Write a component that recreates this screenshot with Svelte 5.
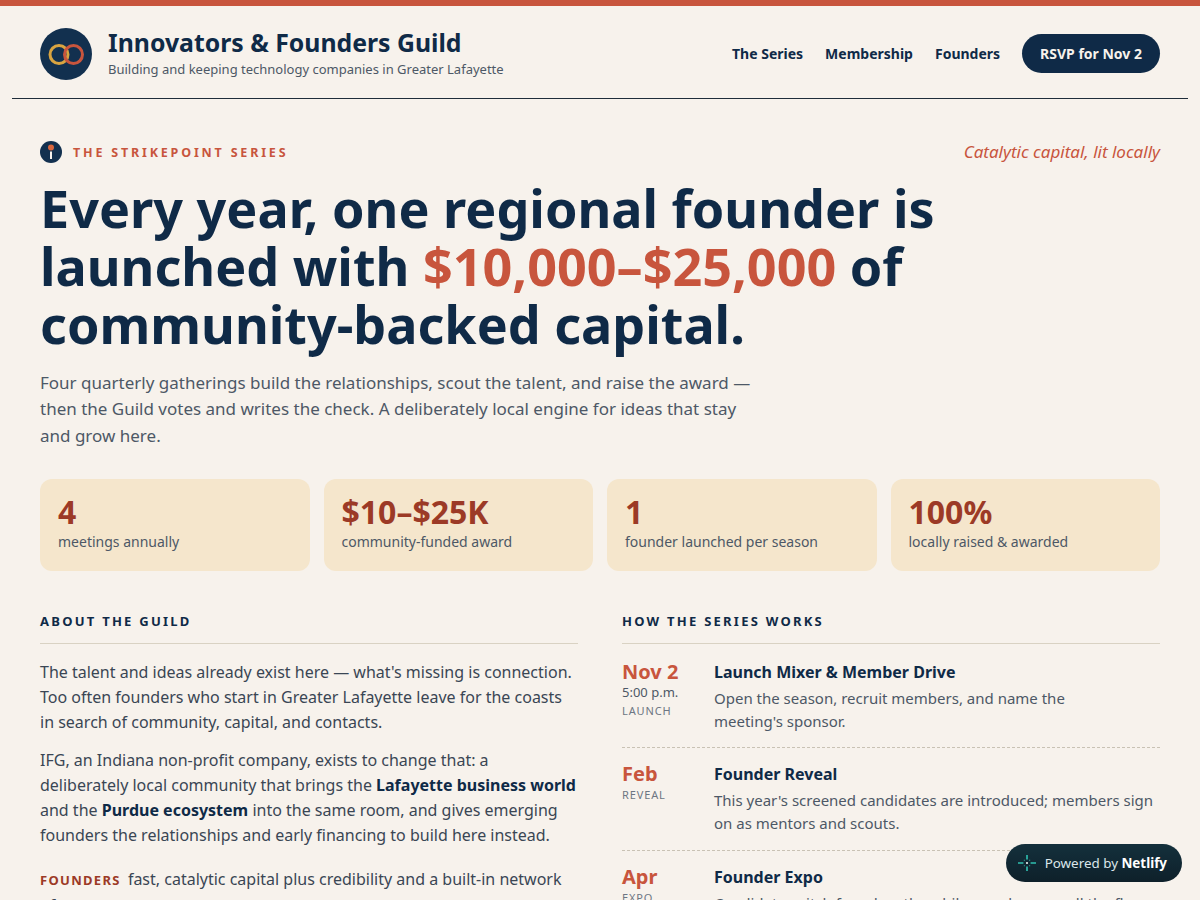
<script lang="ts">
  const stats = [
    { value: "4", label: "meetings annually" },
    { value: "$10–$25K", label: "community-funded award" },
    { value: "1", label: "founder launched per season" },
    { value: "100%", label: "locally raised & awarded" },
  ];

  const steps = [
    {
      date: "Nov 2",
      time: "5:00 p.m.",
      tag: "Launch",
      title: "Launch Mixer & Member Drive",
      text: "Open the season, recruit members, and name the meeting's\u00a0sponsor.",
    },
    {
      date: "Feb",
      tag: "Reveal",
      title: "Founder Reveal",
      text: "This year's screened candidates are introduced; members sign on as mentors and scouts.",
    },
    {
      date: "Apr",
      tag: "Expo",
      title: "Founder Expo",
      text: "Candidates pitch founders the while members enroll the floor and refine their choice.",
    },
  ];
</script>

<div class="topbar"></div>
<div class="shell">
  <header class="site-head">
    <div class="brand">
      <svg class="logo" viewBox="0 0 52 52" aria-hidden="true">
        <circle cx="26" cy="26" r="26" fill="#12304f" />
        <circle cx="19" cy="26.5" r="9" fill="none" stroke="#d9a441" stroke-width="3" />
        <circle cx="33.500" cy="26.5" r="9" fill="none" stroke="#c8553d" stroke-width="3" />
      </svg>
      <div class="brand-text">
        <div class="brand-name">Innovators &amp; Founders Guild</div>
        <div class="brand-sub">Building and keeping technology companies in Greater Lafayette</div>
      </div>
    </div>
    <nav>
      <a href="#series">The Series</a>
      <a href="#membership">Membership</a>
      <a href="#founders">Founders</a>
      <a class="cta" href="#rsvp">RSVP for Nov 2</a>
    </nav>
  </header>

  <main>
    <section class="hero">
      <div class="kicker-row">
        <div class="kicker">
          <svg viewBox="0 0 22 22" aria-hidden="true">
            <circle cx="11" cy="11" r="11" fill="#12304f" />
            <rect x="10" y="10.500" width="2" height="7.500" fill="#f7f2ec" />
            <circle cx="11" cy="6.500" r="3" fill="#d9673f" />
          </svg>
          <span>The Strikepoint Series</span>
        </div>
        <em>Catalytic capital, lit locally</em>
      </div>
      <h1>Every year, one regional founder is launched with <span>$10,000–$25,000</span> of community-backed capital.</h1>
      <p class="lede">Four quarterly gatherings build the relationships, scout the talent, and raise the award — then the Guild votes and writes the check. A deliberately local engine for ideas that stay and grow here.</p>
    </section>

    <section class="stats">
      {#each stats as s}
        <div class="stat">
          <div class="stat-value">{s.value}</div>
          <div class="stat-label">{s.label}</div>
        </div>
      {/each}
    </section>

    <section class="cols">
      <div>
        <h2>About the Guild</h2>
        <p>The talent and ideas already exist here — what's missing is connection. Too often founders who start in Greater Lafayette leave for the coasts in search of community, capital, and contacts.</p>
        <p>IFG, an Indiana non-profit company, exists to change that: a deliberately local community that brings the <strong>Lafayette business world</strong> and the <strong>Purdue ecosystem</strong> into the same room, and gives emerging founders the relationships and early financing to build here instead.</p>
        <p class="audience"><span class="tag">Founders</span> fast, catalytic capital plus credibility and a built-in network of supporters.</p>
      </div>
      <div>
        <h2>How the Series Works</h2>
        <ol>
          {#each steps as step}
            <li>
              <div class="when">
                <div class="date">{step.date}</div>
                {#if step.time}<div class="time">{step.time}</div>{/if}
                <div class="step-tag">{step.tag}</div>
              </div>
              <div>
                <h3>{step.title}</h3>
                <p>{step.text}</p>
              </div>
            </li>
          {/each}
        </ol>
      </div>
    </section>
  </main>
</div>

<a class="netlify" href="#netlify">
  <svg viewBox="0 0 20 20" aria-hidden="true">
    <path d="M0 10h6M14 10h6M10 1v5M10 14v5" stroke="#2fbfb0" stroke-width="1.800" />
    <path d="M6.500 6.500h1v1h-1zM12.500 6.500h1v1h-1zM6.500 12.500h1v1h-1zM12.500 12.500h1v1h-1z" fill="#2fbfb0" />
    <rect x="9" y="9" width="2" height="2" fill="#e8f4f3" />
  </svg>
  <span>Powered by <strong>Netlify</strong></span>
</a>

<style>
  :global(body) {
    background: #f7f2ec;
    color: #0f2a47;
    font-family: "Noto Sans", sans-serif;
  }
  .topbar {
    height: 6px;
    background: #c8553d;
  }
  .shell {
    padding: 0 12px;
  }
  .site-head {
    display: flex;
    align-items: center;
    justify-content: space-between;
    padding: 22px 28px 18px;
    border-bottom: 1px solid #1f2d3a;
  }
  .brand {
    display: flex;
    align-items: center;
    gap: 16px;
  }
  .brand-text {
    margin-top: -2px;
  }
  .logo {
    width: 52px;
    height: 52px;
    display: block;
  }
  .brand-name {
    font-size: 24.800px;
    font-weight: 700;
    line-height: 29px;
  }
  .brand-sub {
    font-size: 13px;
    line-height: 18px;
    margin-top: 3px;
    color: #4d5866;
  }
  nav {
    display: flex;
    align-items: center;
    gap: 22px;
    margin-top: -1px;
  }
  nav a {
    font-size: 14px;
    font-weight: 700;
    color: #0f2a47;
    text-decoration: none;
  }
  nav a.cta {
    background: #0f2a47;
    color: #f7f2ec;
    padding: 10px 18px;
    border-radius: 999px;
  }
  main {
    padding: 0 28px;
  }
  .hero {
    padding-top: 42px;
  }
  .kicker-row {
    display: flex;
    align-items: center;
    justify-content: space-between;
  }
  .kicker {
    display: flex;
    align-items: center;
    gap: 11px;
  }
  .kicker svg {
    width: 22px;
    height: 22px;
  }
  .kicker span {
    font-size: 12.500px;
    font-weight: 700;
    letter-spacing: 0.225em;
    text-transform: uppercase;
    color: #c8553d;
  }
  .kicker-row em {
    margin-top: -2px;
    font-size: 17px;
    color: #c8553d;
  }
  h1 {
    margin: 16px 0 0;
    max-width: 960px;
    font-size: 52.100px;
    font-weight: 700;
    line-height: 58.200px;
  }
  h1 span {
    color: #c8553d;
  }
  .lede {
    margin: 16px 0 0;
    max-width: 720px;
    font-size: 17px;
    line-height: 26.500px;
    color: #4d5866;
  }
  .stats {
    display: grid;
    grid-template-columns: repeat(4, 1fr);
    gap: 14px;
    margin-top: 29.500px;
  }
  .stat {
    background: #f5e6cc;
    border-radius: 12px;
    padding: 16px 18px 18px;
  }
  .stat-value {
    font-size: 32px;
    font-weight: 700;
    line-height: 33px;
    color: #9c3a26;
  }
  .stat-label {
    margin-top: 3px;
    font-size: 14px;
    line-height: 22px;
    color: #4d5866;
  }
  .cols {
    display: grid;
    grid-template-columns: 1fr 1fr;
    gap: 44px;
    margin-top: 40px;
  }
  h2 {
    margin: 0 0 16px;
    padding-bottom: 12px;
    border-bottom: 1px solid #d9d2c3;
    font-size: 13px;
    font-weight: 700;
    line-height: 20px;
    letter-spacing: 0.173em;
    text-transform: uppercase;
  }
  .cols p {
    margin: 0 0 13px;
    font-size: 16px;
    line-height: 25px;
    color: #3a4654;
  }
  .cols p.audience {
    margin-top: 19px;
  }
  .cols strong {
    color: #0f2a47;
  }
  .tag {
    font-size: 13px;
    font-weight: 700;
    letter-spacing: 0.1em;
    text-transform: uppercase;
    color: #9c3a26;
    margin-right: 3px;
  }
  ol {
    list-style: none;
    margin: 0;
    padding: 0;
  }
  li {
    display: grid;
    grid-template-columns: 92px 1fr;
    padding: 0 0 14.500px;
    margin-bottom: 14px;
    border-bottom: 1px dashed #c9c2b4;
  }
  .date {
    font-size: 20px;
    font-weight: 700;
    line-height: 24px;
    color: #c8553d;
  }
  .time {
    margin-top: -2px;
    font-size: 13px;
    line-height: 20px;
    color: #4d5866;
  }
  .step-tag {
    font-size: 11px;
    line-height: 18px;
    letter-spacing: 0.08em;
    text-transform: uppercase;
    color: #6d7683;
  }
  h3 {
    margin: 0;
    font-size: 16px;
    font-weight: 700;
    line-height: 24px;
  }
  .cols li p {
    font-size: 15px;
    line-height: 23px;
    margin: 3px 0 0;
    color: #4d5866;
  }
  .netlify {
    position: fixed;
    right: 18px;
    bottom: 18px;
    display: flex;
    align-items: center;
    gap: 9px;
    height: 38px;
    padding: 0 15px 0 12px;
    border-radius: 19px;
    background: linear-gradient(#14303c, #0e202a);
    color: #dbe6ea;
    font-size: 13.400px;
    text-decoration: none;
  }
  .netlify svg {
    width: 18px;
    height: 18px;
  }
  .netlify strong {
    color: #fff;
  }
</style>
